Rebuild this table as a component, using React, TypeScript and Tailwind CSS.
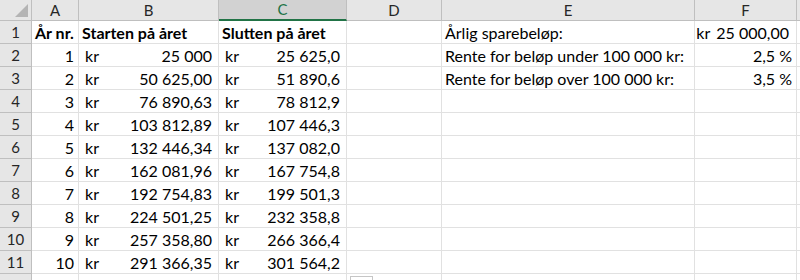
import React from 'react';

const cols = ['A', 'B', 'C', 'D', 'E', 'F'];

type Cell = { text?: string; kr?: string; align?: 'l' | 'r'; bold?: boolean; pr?: string };

const years = [
  { n: '1', start: '25 000', end: '25 625,0' },
  { n: '2', start: '50 625,00', end: '51 890,6' },
  { n: '3', start: '76 890,63', end: '78 812,9' },
  { n: '4', start: '103 812,89', end: '107 446,3' },
  { n: '5', start: '132 446,34', end: '137 082,0' },
  { n: '6', start: '162 081,96', end: '167 754,8' },
  { n: '7', start: '192 754,83', end: '199 501,3' },
  { n: '8', start: '224 501,25', end: '232 358,8' },
  { n: '9', start: '257 358,80', end: '266 366,4' },
  { n: '10', start: '291 366,35', end: '301 564,2' },
];

const side: Record<number, [string, Cell]> = {
  3: ['Rente for beløp under 100 000 kr:', { text: '2,5 %', align: 'r' }],
  4: ['Rente for beløp over 100 000 kr:', { text: '3,5 %', align: 'r' }],
};

function buildRows(): Cell[][] {
  const rows: Cell[][] = [];
  rows.push([
    { text: 'År nr.', bold: true },
    { text: 'Starten på året', bold: true },
    { text: 'Slutten på året', bold: true },
    {},
    { text: 'Årlig sparebeløp:' },
    { kr: 'kr', text: '25 000,00', align: 'l' },
  ]);
  years.forEach((y, i) => {
    const r = i + 2;
    const e = side[r + 1];
    rows.push([
      { text: y.n, align: 'r' },
      { kr: 'kr', text: y.start, align: 'r' },
      { kr: 'kr', text: y.end, align: 'r' },
      {},
      e ? { text: e[0] } : {},
      e ? e[1] : {},
    ]);
  });
  return rows;
}

function CellView({ c }: { c: Cell }) {
  // accounting format with the symbol kept next to the number
  if (c.kr && c.align === 'l') {
    return (
      <div className="flex h-full items-center justify-end gap-[6px] pr-[7px] pt-[1px]">
        <span>{c.kr}</span>
        <span>{c.text}</span>
      </div>
    );
  }
  if (c.kr) {
    return (
      <div className="flex h-full items-center justify-between pl-[6px] pr-[6px] pt-[1px]">
        <span>{c.kr}</span>
        <span>{c.text}</span>
      </div>
    );
  }
  return (
    <div
      className={`flex h-full items-center whitespace-nowrap pl-[3px] pr-[4px] pt-[1px] ${c.align === 'r' ? 'justify-end' : 'justify-start'} ${c.bold ? 'font-bold' : ''}`}
    >
      {c.text}
    </div>
  );
}

export default function App() {
  const rows = buildRows();
  const gridCols = 'grid-cols-[32px_47px_140px_128px_95px_253px_102px_3px]';

  return (
    <div className="relative h-[280px] w-[800px] overflow-hidden bg-white text-[16px] text-black" style={{ fontFamily: 'Lato, "Liberation Sans", sans-serif' }}>
      <div className={`grid ${gridCols} auto-rows-[23px] grid-rows-[21px]`}>
        {/* Corner */}
        <div className="relative border-b border-r border-[#bfbfbf] bg-[#e6e6e6]">
          <svg className="absolute bottom-[3px] right-[3px]" width="13" height="13" viewBox="0 0 13 13">
            <polygon points="13,0 13,13 0,13" fill="#b4b4b4" />
          </svg>
        </div>
        {cols.map((c) => (
          <div
            key={c}
            className={
              c === 'C'
                ? 'flex items-center justify-center border-b-2 border-r border-b-[#217346] border-r-[#bfbfbf] bg-[#d2d2d2] text-[15px] text-[#217346]'
                : 'flex items-center justify-center border-b border-r border-[#bfbfbf] bg-[#e6e6e6] text-[15px] text-[#262626]'
            }
          >
            {c}
          </div>
        ))}
        <div className="border-b border-[#bfbfbf] bg-[#e6e6e6]" />

        {rows.map((r, i) => (
          <React.Fragment key={i}>
            <div className="flex items-center justify-center border-b border-r border-[#bfbfbf] bg-[#e6e6e6] text-[15px] text-[#262626]">
              {i + 1}
            </div>
            {r.map((c, j) => (
              <div key={j} className="border-b border-r border-[#e1e1e1]">
                <CellView c={c} />
              </div>
            ))}
            <div className="border-b border-[#e1e1e1]" />
          </React.Fragment>
        ))}

        <div className="border-r border-[#bfbfbf] bg-[#e6e6e6]" />
        {cols.map((c) => (
          <div key={c} className="border-r border-[#e1e1e1]" />
        ))}
        <div />
      </div>

      {/* Auto-fill options stub */}
      <div className="absolute left-[350px] top-[276px] h-[10px] w-[23px] border border-[#c6c6c6] bg-white" />
    </div>
  );
}
